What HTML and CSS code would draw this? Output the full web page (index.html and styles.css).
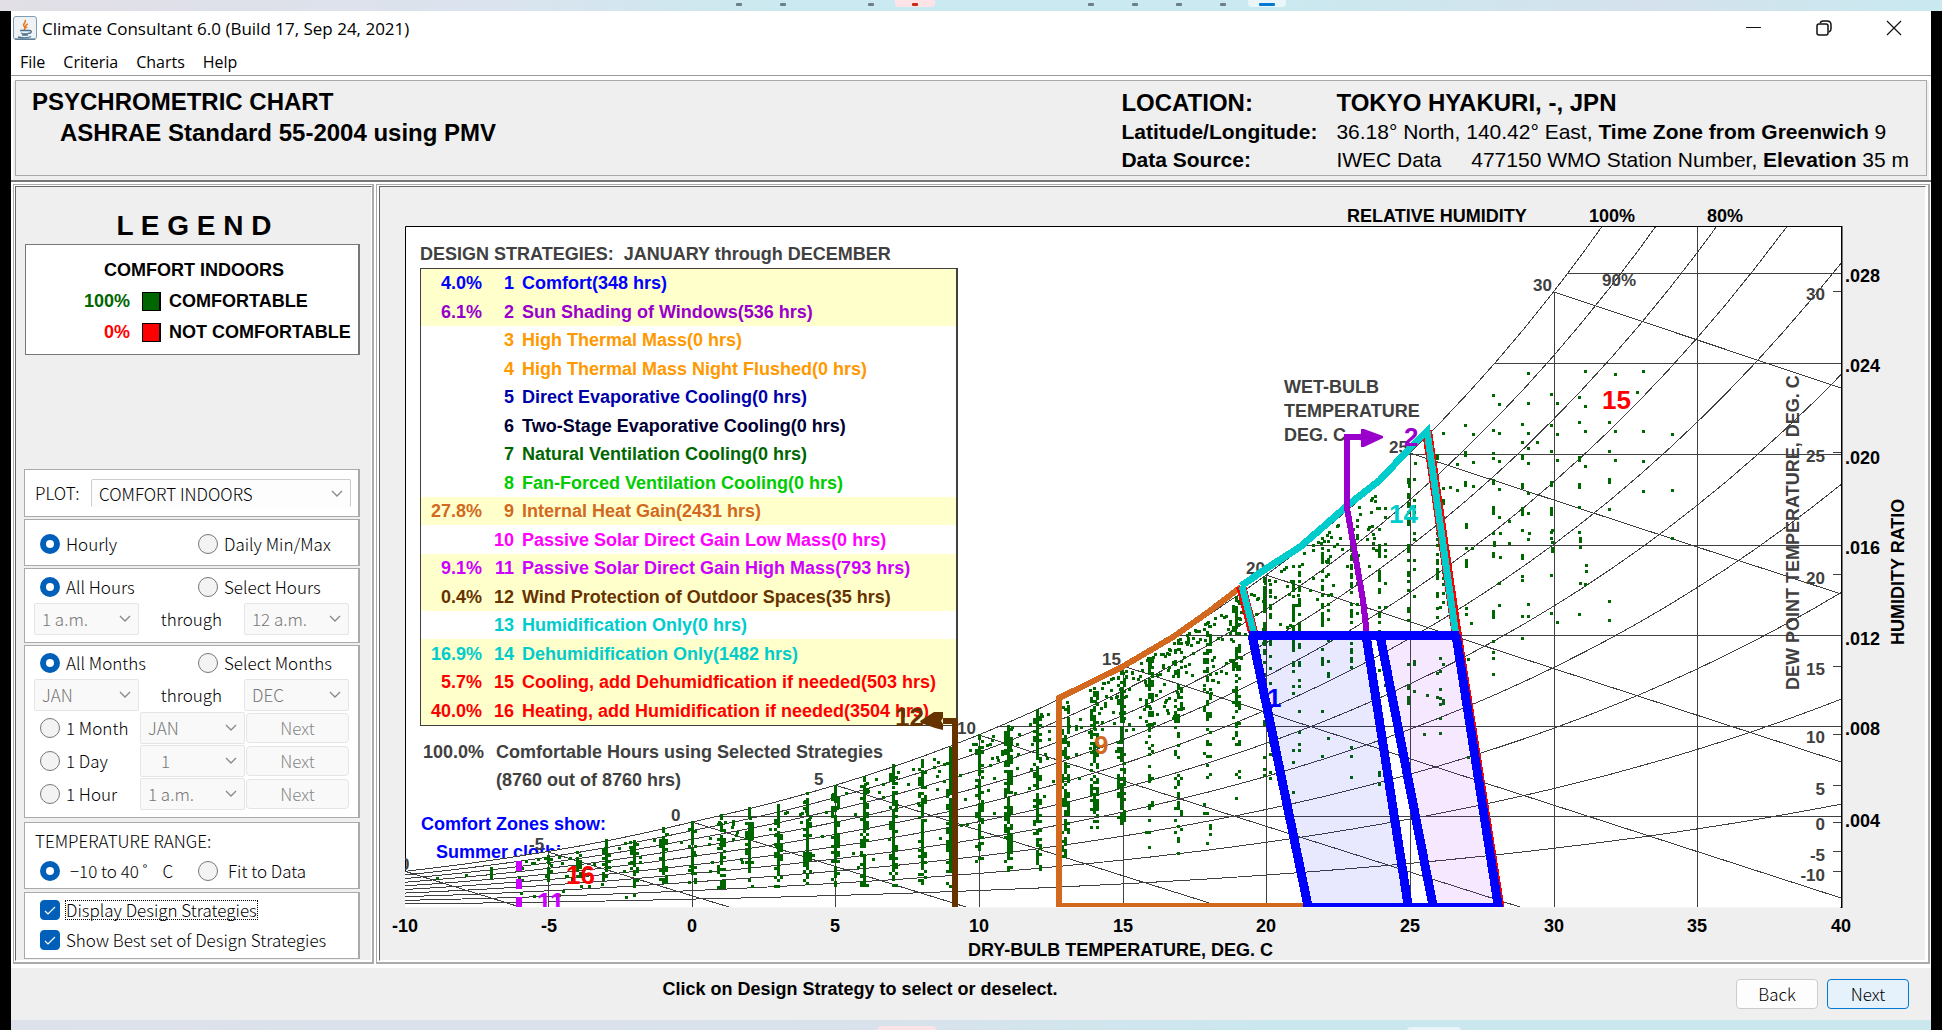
FILE: index.html
```html
<!DOCTYPE html>
<html lang="en">
<head>
<meta charset="utf-8">
<title>Climate Consultant 6.0</title>
<link rel="stylesheet" href="styles.css">
</head>
<body>
<div class="taskbar taskbar-top">
  <svg width="100%" height="11">
    <g fill="#6b7f89"><rect x="736" y="3" width="6" height="3" rx="1"/><rect x="780" y="3" width="6" height="3" rx="1"/><rect x="868" y="3" width="6" height="3" rx="1"/><rect x="1088" y="3" width="6" height="3" rx="1"/><rect x="1132" y="3" width="6" height="3" rx="1"/><rect x="1176" y="3" width="6" height="3" rx="1"/><rect x="1220" y="3" width="6" height="3" rx="1"/></g>
    <rect x="895" y="-6" width="40" height="13" rx="4" fill="#fde3e5"/><rect x="912" y="3" width="6" height="3" rx="1" fill="#c42b1c"/>
    <rect x="1248" y="-6" width="38" height="13" rx="4" fill="#e8f5f9"/><rect x="1259" y="3" width="16" height="3" rx="1" fill="#0078d4"/>
  </svg>
</div>
<div class="window">
  <header class="titlebar">
    <svg class="app-icon" viewBox="0 0 24 24" width="24" height="24">
      <rect x=".5" y=".5" width="23" height="23" rx="2.500" fill="#eef2f5" stroke="#7f9db5"/>
      <path d="M2 23h20" stroke="#3f6179"/>
      <path d="M12 4c2 2-3 4-1 6 1 1 2 2 0 4M15 8c-3 1-3 2-1 4" fill="none" stroke="#e87b1e" stroke-width="1.500"/>
      <path d="M7 14.500h9.500c3 0 2 3-1 3M8 17c2 1 6 1 8 0M9 19h6M5 21c4 1 10 1 13-.500" fill="none" stroke="#4a7391" stroke-width="1.300"/>
    </svg>
    <span class="title">Climate Consultant 6.0 (Build 17, Sep 24, 2021)</span>
    <div class="win-buttons">
      <button aria-label="Minimize"><svg width="16" height="16"><path d="M0 7.500h15" stroke="#111"/></svg></button>
      <button aria-label="Restore"><svg width="16" height="16" fill="none" stroke="#111" stroke-width="1.500"><rect x="1" y="4" width="11" height="11" rx="2"/><path d="M4 3q1-2 3-2h4q4 0 4 4v4q0 2-2 3"/></svg></button>
      <button aria-label="Close"><svg width="16" height="16"><path d="M1 1l14 14M15 1L1 15" stroke="#111" stroke-width="1.200"/></svg></button>
    </div>
  </header>
  <nav class="menubar"><a href="#">File</a><a href="#">Criteria</a><a href="#">Charts</a><a href="#">Help</a></nav>
  <section class="info">
    <h1>PSYCHROMETRIC CHART<span>ASHRAE Standard 55-2004 using PMV</span></h1>
    <dl>
      <dt class="big">LOCATION:</dt><dd class="big">TOKYO HYAKURI, -, JPN</dd>
      <dt>Latitude/Longitude:</dt><dd>36.18° North, 140.42° East, <b>Time Zone from Greenwich</b> 9</dd>
      <dt>Data Source:</dt><dd>IWEC Data <span class="wmo">477150 WMO Station Number,</span> <b>Elevation</b> 35 m</dd>
    </dl>
  </section>
  <main class="body">
    <aside class="frame side"><div class="frame-in side-in">
      <h2>L E G E N D</h2>
      <div class="legend">
        <h3>COMFORT INDOORS</h3>
        <div class="key"><span class="pct green">100%</span><i class="swatch sw-green"></i><span>COMFORTABLE</span></div>
        <div class="key"><span class="pct red">0%</span><i class="swatch sw-red"></i><span>NOT COMFORTABLE</span></div>
      </div>
      <form class="controls">
        <div class="group plot-group"><label for="plot">PLOT:</label><select id="plot"><option>COMFORT INDOORS</option></select></div>
        <div class="group one">
          <div class="pair"><label><input type="radio" name="mode" checked>Hourly</label><label><input type="radio" name="mode">Daily Min/Max</label></div>
        </div>
        <div class="group hours">
          <div class="pair"><label><input type="radio" name="hours" checked>All Hours</label><label><input type="radio" name="hours">Select Hours</label></div>
          <div class="range"><select disabled aria-label="First hour"><option>1 a.m.</option></select><span>through</span><select disabled aria-label="Last hour"><option>12 a.m.</option></select></div>
        </div>
        <div class="group months">
          <div class="pair"><label><input type="radio" name="months" checked>All Months</label><label><input type="radio" name="months">Select Months</label></div>
          <div class="range"><select disabled aria-label="First month"><option>JAN</option></select><span>through</span><select disabled aria-label="Last month"><option>DEC</option></select></div>
          <div class="step"><label><input type="radio" name="months">1 Month</label><select disabled aria-label="Month"><option>JAN</option></select><button type="button" disabled>Next</button></div>
          <div class="step"><label><input type="radio" name="months">1 Day</label><select class="day" disabled aria-label="Day"><option>1</option></select><button type="button" disabled>Next</button></div>
          <div class="step"><label><input type="radio" name="months">1 Hour</label><select disabled aria-label="Hour"><option>1 a.m.</option></select><button type="button" disabled>Next</button></div>
        </div>
        <div class="group temp">
          <p>TEMPERATURE RANGE:</p>
          <div class="pair wide"><label><input type="radio" name="temp" checked>−10 to 40 ˚&nbsp;&nbsp;&nbsp; C</label><label><input type="radio" name="temp">Fit to Data</label></div>
        </div>
        <div class="group checks">
          <label><input type="checkbox" checked><span class="focused">Display Design Strategies</span></label>
          <label><input type="checkbox" checked>Show Best set of Design Strategies</label>
        </div>
      </form>
    </div></aside>
    <section class="frame chart"><div class="frame-in stack">
      <svg class="layer" viewBox="380 187 1545 773">
        <rect x="405" y="226.500" width="1436" height="681" fill="#fff"/>
        <path d="M405.500 907V226.500H1841V907" fill="none" stroke="#000" stroke-width="1"/>
        <path d="M1841.500 226V908" stroke="#000" stroke-width="2"/>
        <g class="t dim">
          <text x="420" y="260" xml:space="preserve">DESIGN STRATEGIES:  JANUARY through DECEMBER</text>
          <text x="484" y="758" text-anchor="end">100.0%</text>
          <text x="496" y="758">Comfortable Hours using Selected Strategies</text>
          <text x="496" y="786">(8760 out of 8760 hrs)</text>
        </g>
        <g class="t blue"><text x="421" y="830">Comfort Zones show:</text><text x="436" y="858">Summer clothi</text></g>
      </svg>
      <table class="strategies">
        <tr class="on c1"><td>4.0%</td><td>1</td><td>Comfort(348 hrs)</td></tr>
        <tr class="on c2"><td>6.1%</td><td>2</td><td>Sun Shading of Windows(536 hrs)</td></tr>
        <tr class="c3"><td></td><td>3</td><td>High Thermal Mass(0 hrs)</td></tr>
        <tr class="c3"><td></td><td>4</td><td>High Thermal Mass Night Flushed(0 hrs)</td></tr>
        <tr class="c5"><td></td><td>5</td><td>Direct Evaporative Cooling(0 hrs)</td></tr>
        <tr class="c6"><td></td><td>6</td><td>Two-Stage Evaporative Cooling(0 hrs)</td></tr>
        <tr class="c7"><td></td><td>7</td><td>Natural Ventilation Cooling(0 hrs)</td></tr>
        <tr class="c8"><td></td><td>8</td><td>Fan-Forced Ventilation Cooling(0 hrs)</td></tr>
        <tr class="on c9"><td>27.8%</td><td>9</td><td>Internal Heat Gain(2431 hrs)</td></tr>
        <tr class="c10"><td></td><td>10</td><td>Passive Solar Direct Gain Low Mass(0 hrs)</td></tr>
        <tr class="on c11"><td>9.1%</td><td>11</td><td>Passive Solar Direct Gain High Mass(793 hrs)</td></tr>
        <tr class="on c12"><td>0.4%</td><td>12</td><td>Wind Protection of Outdoor Spaces(35 hrs)</td></tr>
        <tr class="c13"><td></td><td>13</td><td>Humidification Only(0 hrs)</td></tr>
        <tr class="on c13"><td>16.9%</td><td>14</td><td>Dehumidification Only(1482 hrs)</td></tr>
        <tr class="on c15"><td>5.7%</td><td>15</td><td>Cooling, add Dehumidfication if needed(503 hrs)</td></tr>
        <tr class="on c15"><td>40.0%</td><td>16</td><td>Heating, add Humidification if needed(3504 hrs)</td></tr>
      </table>
      <svg class="layer" viewBox="380 187 1545 773">
        <defs><clipPath id="box"><rect x="405" y="227" width="1436" height="680"/></clipPath></defs>
        <g clip-path="url(#box)">
          <path id="mask" fill="#fff"/>
          <g id="grid" fill="none" stroke="#404040" shape-rendering="crispEdges"></g>
          <g class="t dim small">
            <text x="385" y="870">-10</text><text x="529" y="850">-5</text><text x="671" y="821">0</text><text x="814" y="785">5</text>
            <text x="957" y="734">10</text><text x="1102" y="665">15</text><text x="1246" y="574">20</text><text x="1389" y="453">25</text><text x="1533" y="291">30</text>
            <text x="1602" y="286">90%</text>
          </g>
          <path id="dots" fill="#006600" shape-rendering="crispEdges"/>
          <g class="t dim"><text x="1284" y="393">WET-BULB</text><text x="1284" y="417">TEMPERATURE</text><text x="1284" y="441">DEG. C</text></g>
          <path d="M1249 635H1367L1408 911H1309Z" fill="#0000ff" fill-opacity=".09"/>
          <path d="M1380 635H1456L1499 911H1434Z" fill="#9900ff" fill-opacity=".09"/>
          <g fill="none" shape-rendering="crispEdges">
            <path d="M1059 912V698L1122 667 1173 637 1207 613 1241 587M1056 906H1305" stroke="#d2691e" stroke-width="6"/>
            <path d="M1241 586L1253 632 M1427 431L1457 636 1500 911" stroke="#f00" stroke-width="10"/>
            <path d="M1241 586L1267 568 1300 547 1323 527 1348 505 1380 480 1410 448 1427 431L1456 636M1242 586L1254 634" stroke="#00cccc" stroke-width="7"/>
            <path d="M1362 437H1347V508L1363 600 1367 636" stroke="#9900cc" stroke-width="6"/>
            <path d="M1249 635.500H1459" stroke="#00f" stroke-width="9"/>
            <path d="M1252 635L1309 911M1366 635L1409 911M1380 635L1434 911M1456 635L1499 911" stroke="#00f" stroke-width="9"/>
            <path d="M1306 905H1502" stroke="#00f" stroke-width="4"/>
            <path d="M943 721H955V907" stroke="#663300" stroke-width="6"/>
            <path d="M519 861v10M519 879v10M519 897v10" stroke="#cc00ff" stroke-width="6"/>
          </g>
          <path d="M1361 429l3 0 19 7v2l-19 9h-3v-6l-2-4 2-4z" fill="#9900cc"/>
          <path d="M943 712l-9 0-14 9 1 2 14 5 8 2v-6l-2-3 2-3z" fill="#663300"/>
          <g class="big-n">
            <text x="1267" y="707" fill="#00f">1</text><text x="1404" y="446" fill="#9900cc">2</text><text x="1094" y="754" fill="#d2691e">9</text>
            <text x="537" y="911" fill="#cc00ff">11</text><text x="895" y="726" fill="#663300">12</text><text x="1389" y="523" fill="#0cc">14</text>
            <text x="1602" y="409" fill="#f00">15</text><text x="566" y="884" fill="#f00">16</text>
          </g>
          <g class="t dim small" text-anchor="end">
            <text x="1825" y="300">30</text><text x="1825" y="462">25</text><text x="1825" y="584">20</text><text x="1825" y="675">15</text><text x="1825" y="743">10</text><text x="1825" y="795">5</text><text x="1825" y="830">0</text><text x="1825" y="861">-5</text><text x="1825" y="881">-10</text>
          </g>
          <text class="t dim" transform="translate(1799 690) rotate(-90)">DEW POINT TEMPERATURE, DEG. C</text>
        </g>
        <g class="t">
          <text x="1347" y="222">RELATIVE HUMIDITY</text><text x="1589" y="222">100%</text><text x="1707" y="222">80%</text>
          <text x="1845" y="282">.028</text><text x="1845" y="372">.024</text><text x="1845" y="464">.020</text><text x="1845" y="554">.016</text><text x="1845" y="645">.012</text><text x="1845" y="735">.008</text><text x="1845" y="827">.004</text>
          <text x="968" y="956">DRY-BULB TEMPERATURE, DEG. C</text>
          <text transform="translate(1904 645) rotate(-90)">HUMIDITY RATIO</text>
          <g id="axis" text-anchor="middle"></g>
        </g>
      </svg>
    </div></section>
  </main>
  <footer class="footer">
    <p>Click on Design Strategy to select or deselect.</p>
    <div class="nav-buttons"><button>Back</button><button class="primary">Next</button></div>
  </footer>
</div>
<div class="taskbar taskbar-bottom">
  <svg width="100%" height="11"><rect x="867" y="6" width="58" height="12" rx="4" fill="#fde3e5"/><rect x="1396" y="7" width="54" height="12" rx="4" fill="#e8f5f9"/></svg>
</div>
<script src="chart.js"></script>
</body>
</html>
```
FILE: chart.js
```js
// Psychrometric grid: dry-bulb temperature across, humidity ratio up.
const X = t => 691.8 + 28.73 * t;
const Y = w => 907.6 - 22655 * w;
const ps = t => t < 0
  ? 611.15 * Math.exp(22.452 * t / (272.55 + t))
  : 611.21 * Math.exp(17.502 * t / (240.97 + t));
const ratio = (t, rh) => { const p = ps(t) * rh; return 0.622 * p / (101325 - p); };
const satY = t => Y(ratio(t, 1));
const line = rh => {
  let d = '';
  for (let t = -10; t <= 40; t++) d += (d ? 'L' : 'M') + X(t).toFixed(1) + ' ' + Y(ratio(t, rh)).toFixed(1);
  return d;
};
const satT = y => { let t = -10; while (satY(t) > y) t += 0.05; return t; };

document.getElementById('mask').setAttribute('d', line(1) + 'V907H405Z');

let grid = '';
for (let i = 1; i <= 10; i++) grid += line(i / 10);
for (let t = -10; t < 40; t += 5) grid += `M${Math.round(X(t)) + .5} 907V${Math.max(227, satY(t)).toFixed(0)}`;
for (let w = 0.004; w < 0.03; w += 0.004) {
  const y = Math.floor(Y(w)) + .5;
  grid += `M${X(satT(y)).toFixed(0)} ${y}H1841`;
}
// Wet-bulb lines, each starting on the saturation curve
const wet = [[-10, 520, 907], [-5, 729, 907], [0, 966, 907], [5, 1222, 907], [10, 1520, 907], [15, 1841, 898], [20, 1841, 762], [25, 1841, 594], [30, 1841, 388]];
for (const [t, x, y] of wet) {
  grid += `M${X(t).toFixed(0)} ${satY(t).toFixed(0)}L${x} ${y}M1833 ${Math.floor(satY(t)) + .5}H1841`;
}
document.getElementById('grid').innerHTML = `<path d="${grid}"/>`;

let axis = '';
for (let t = -10; t <= 40; t += 5) axis += `<text x="${Math.round(X(t)) + (t < 0 ? 1 : 0)}" y="932">${t}</text>`;
document.getElementById('axis').innerHTML = axis;

// Hourly readings: [temperature, top, bottom, centre density, side density]
let seed = 7;
const rnd = () => (seed = (seed * 16807) % 2147483647) / 2147483647;
const cols = [
  [-7, 868, 883, .8, .3], [-6, 862, 885, .7, .3], [-5, 856, 886, .9, .3], [-4, 852, 885, .9, .5], [-3, 840, 883, .95, .4],
  [-2, 838, 888, .9, .5], [-1, 828, 885, .95, .4], [0, 822, 883, .95, .45], [1, 815, 890, .9, .4], [2, 808, 887, .95, .4],
  [3, 805, 887, .9, .4], [4, 793, 885, .95, .4], [5, 786, 888, .95, .45], [6, 777, 888, .9, .35], [7, 765, 892, .92, .35],
  [8, 760, 893, .85, .35], [9, 748, 887, .97, .5], [10, 735, 864, .9, .35], [11, 723, 873, .9, .45], [12, 710, 870, .9, .45],
  [13, 703, 867, .7, .5], [14, 686, 828, .7, .45], [15, 670, 825, .8, .4], [16, 655, 730, .6, .5], [16, 730, 850, .35, .18],
  [17, 640, 730, .6, .5], [17, 730, 855, .28, .14], [18, 620, 720, .55, .4], [18, 720, 850, .2, .12], [19, 597, 720, .6, .4],
  [19, 720, 822, .24, .14], [20, 575, 700, .5, .4], [20, 700, 785, .3, .1], [21, 560, 690, .5, .35], [21, 690, 800, .15, .1],
  [22, 538, 680, .5, .3], [22, 690, 780, .08, .03], [23, 520, 680, .45, .25], [23, 690, 780, .1, .03], [24, 505, 640, .42, .2],
  [24, 640, 790, .08, .04], [25, 479, 640, .45, .22], [25, 640, 735, .14, .1], [26, 500, 620, .42, .1], [26, 640, 735, .07, .06],
  [27, 500, 622, .34, .05], [28, 530, 575, .35, .05], [29, 530, 575, .3, .05], [30, 530, 565, .3, .02], [31, 535, 600, .3, .05]
];
let d = '';
const dot = (x, y) => { d += `M${Math.round(x) - 1} ${Math.round(y) - 1}h3v3h-3z`; };
for (const [t, top, bot, mid, side] of cols) {
  const x = X(t) + (t > 14 ? -2 : 0);
  for (let y = top; y < bot; y += 3) {
    const fade = y > bot - 15 ? .7 : 1;
    if (rnd() < mid * fade) dot(x, y);
    if (rnd() < side * fade && y > satY(t) + 5) dot(x + (t > 19 ? 6 : 3), y);
    if (t < 20 && rnd() < side * .8 * fade && y > top + 6) dot(x - 3, y);
  }
}
// Readings between whole degrees crowd under the saturation curve
const between = (a, b, n, depth) => {
  for (let i = 0; i < n; i++) {
    const t = a + rnd() * (b - a), k = rnd();
    dot(X(t), satY(t) + 6 + k * k * depth);
  }
};
between(-6, 4, 75, 55);
between(4, 10, 45, 85);
between(10, 14, 60, 90);
between(14, 20, 180, 75);
between(20, 24, 70, 70);
dot(437, 878); dot(466, 875);
const single = {
  1409: [483, 486], 1415: [463], 1437: [455, 458], 1443: [433, 488], 1450: [487], 1457: [464, 490],
  1465: [425, 452, 455, 482, 485], 1473: [434, 462, 486], 1471: [623], 1468: [659, 757],
  1493: [395, 430, 453, 458, 480, 483, 507, 510, 513, 533, 553, 556, 611, 614, 617, 641, 652, 658, 674],
  1499: [404, 433, 461, 489, 517, 583, 605], 1509: [521, 543],
  1522: [424, 442, 455, 458, 484, 487, 508, 511, 514, 530, 555, 558, 576, 580, 616, 638],
  1528: [373, 403, 433, 448, 463, 493, 513, 539, 604, 616], 1537: [442],
  1551: [394, 425, 451, 482, 485, 508, 511, 514, 532, 538, 575, 613], 1557: [403, 434, 460, 622],
  1579: [397, 422, 457, 460, 484, 487, 507, 532, 614], 1585: [371, 406, 431, 466, 584],
  1609: [422, 451, 479, 482, 509, 601, 620], 1615: [374, 431, 460], 1637: [392],
  1643: [371, 431, 461, 491], 1672: [434, 490, 538],
  1440: [607, 658, 671, 689, 698, 704, 718, 733], 1427: [695], 1424: [734]
};
for (const x in single) single[x].forEach(y => dot(+x, y));
document.getElementById('dots').setAttribute('d', d);
```
FILE: styles.css
```css
* { box-sizing: border-box; }
body { margin: 0; background: #000; color: #000; font-family: "Liberation Sans", Arial, sans-serif; font-size: 18px; }
h1, h2, h3, p, dl, dd { margin: 0; }
.taskbar { height: 11px; background: linear-gradient(90deg, #e2dfe6, #dbe3ee 25%, #cbe9f0 40%, #cbe9f0 65%, #d5e2ed 85%, #c9e9f0); }
.taskbar svg { display: block; }
.taskbar-bottom { margin: 0 11px; background: linear-gradient(90deg, #dde1ea, #d9e2ec 45%, #cbe7ee 65%, #cbe7ee); }
.window { margin: 0 11px; background: #efefef; }

.titlebar { display: flex; align-items: center; height: 34px; padding: 0 2px; background: #fff; font-family: "Open Sans", "Noto Sans", sans-serif; font-size: 17px; }
.title { margin-left: 5px; flex: 1; }
.win-buttons { display: flex; }
.win-buttons button { display: flex; justify-content: center; align-items: center; width: 70px; height: 32px; padding: 0; border: 0; background: none; }
.menubar { display: flex; gap: 18px; height: 31px; padding: 1px 0 0 9px; background: #fff; border-bottom: 1px solid #999; font: 16px/32px "Open Sans", "Noto Sans", sans-serif; }
.menubar a { color: #000; text-decoration: none; }

.info { display: flex; justify-content: space-between; height: 104px; padding: 5px 10px 0 19px; border: 2px solid #fff; border-top-width: 5px; border-bottom: 0; outline: 1px solid #aaa; outline-offset: -5px; }
.info h1 { font-size: 24px; line-height: 31px; }
.info h1 span { display: block; padding-left: 28px; }
.info dl { display: grid; grid-template-columns: 215px auto; align-content: start; padding: 1px 10px 0 0; font-size: 21px; line-height: 28px; }
.info dt { font-weight: bold; }
.info .big { font-size: 24px; line-height: 31px; font-weight: bold; }
.wmo { margin-left: 24px; }

.body { display: flex; gap: 2px; padding: 2px 1px 4px 2px; border-top: 2px solid #777; background: #fff; }
.frame { border: 1px solid #aaa; border-right-width: 2px; border-bottom-width: 2px; padding: 1px; background: #fff; }
.frame-in { border: 1px solid #fff; border-top-color: #666; border-left-color: #666; background: #efefef; }
.side { width: 361px; flex: none; display: flex; }
.side-in { flex: 1; display: flex; flex-direction: column; padding: 0 11px 1px 8px; }
.chart { flex: 1; min-width: 0; padding: 1px 2px; }
.stack { display: grid; }
.layer { grid-area: 1 / 1; width: 100%; height: auto; display: block; pointer-events: none; }

h2 { font-size: 28px; line-height: 32px; text-align: center; padding: 23px 0 0 4px; }
.legend { margin: 2px 0 0 1px; height: 111px; background: #fff; border: 1px solid #777; border-right-width: 2px; padding: 10px 4px 0 8px; font-weight: bold; white-space: nowrap; }
.legend h3 { font-size: 18px; line-height: 31px; text-align: center; }
.key { display: grid; grid-template-columns: 100px 19px auto; align-items: center; column-gap: 8px; height: 31px; }
.key .pct { text-align: right; padding-right: 4px; }
.green { color: #060; }
.red { color: #f00; }
.swatch { width: 19px; height: 19px; border: 1px solid #000; border-right-width: 2px; }
.sw-green { background: #060; }
.sw-red { background: #f00; }

.controls { display: flex; flex-direction: column; gap: 2px; margin-top: auto; font: 300 17px/24px "Noto Sans CJK JP", "Noto Sans", sans-serif; }
.controls button, .controls select, .nav-buttons button { font: inherit; }
.group { background: #fff; border: 1px solid #aaa; border-right-width: 2px; }
.plot-group { display: flex; align-items: center; height: 48px; padding: 0 7px 0 10px; }
.plot-group label { width: 56px; }
.plot-group select { flex: 1; height: 28px; border-bottom: 0; background-color: #fdfdfd; border-color: #ccc; color: #000; }
.one { height: 47px; padding-top: 12px; }
.hours { height: 75px; padding-top: 6px; }
.months { height: 173px; padding-top: 5px; }
.temp { height: 67px; margin-top: 2px; padding-top: 6px; }
.checks { display: flex; flex-direction: column; gap: 8px; height: 67px; margin-top: 1px; padding: 7px 0 0 15px; }
.temp p { padding: 0 0 6px 10px; }
.pair { display: grid; grid-template-columns: 158px auto; padding-left: 15px; }
.group label { display: flex; align-items: center; gap: 6px; white-space: nowrap; }
.wide label { gap: 10px; }
.range { display: flex; align-items: center; justify-content: space-between; padding: 4px 9px 0 9px; }
.step { display: grid; grid-template-columns: 99px 105px 103px; column-gap: 1px; align-items: center; padding: 1px 9px 0 15px; }
select { appearance: none; width: 105px; height: 32px; padding: 0 7px; border: 1px solid #e5e5e5; border-radius: 2px; background: #f9f9f9 url("data:image/svg+xml,%3Csvg xmlns='http://www.w3.org/2000/svg' width='12' height='8'%3E%3Cpath d='M1 1l5 5 5-5' fill='none' stroke='%23888' stroke-width='1.3'/%3E%3C/svg%3E") no-repeat right 7px center; }
select:disabled { color: #777; opacity: 1; }
.day { padding-left: 20px; }
.step button { height: 30px; border: 1px solid #e5e5e5; border-radius: 4px; background: #f9f9f9; color: #888; padding: 0; }
input[type=radio], input[type=checkbox] { appearance: none; flex: none; width: 20px; height: 20px; margin: 0; border: 1px solid #777; border-radius: 50%; background: #f3f3f3; }
input[type=radio]:checked { border: 6px solid #005fb8; background: #fff; }
input[type=checkbox] { border-radius: 4px; border-color: #005fb8; background: #005fb8 url("data:image/svg+xml,%3Csvg xmlns='http://www.w3.org/2000/svg' width='12' height='9'%3E%3Cpath d='M1 5l3 3 7-7' fill='none' stroke='white' stroke-width='1.2'/%3E%3C/svg%3E") no-repeat center; }
.focused { line-height: 18px; outline: 1px dotted #000; }

.strategies { grid-area: 1 / 1; place-self: start; width: 538px; margin: 81px 0 0 40px; border: 1px solid #404040; border-right-width: 2px; border-collapse: separate; border-spacing: 0; background: #fff; font-weight: bold; font-size: 18px; line-height: 28px; table-layout: fixed; white-space: nowrap; }
.strategies tr { height: 28px; }
.strategies tr:nth-child(even) { height: 29px; }
.strategies td { padding: 0; text-align: right; }
.strategies td:nth-child(1) { width: 61px; }
.strategies td:nth-child(2) { width: 32px; }
.strategies td:nth-child(3) { text-align: left; padding-left: 8px; }
.on { background: #ffffcc; }
.c1 { color: #00f; } .c2 { color: #90c; } .c3 { color: #f90; } .c5 { color: #00a; } .c6 { color: #003; } .c7 { color: #060; } .c8 { color: #0c0; }
.c9 { color: #d2691e; } .c10 { color: #f0f; } .c11 { color: #c0f; } .c12 { color: #630; } .c13 { color: #0cc; } .c15 { color: #f00; }

.t { font-weight: bold; font-size: 18px; }
.small { font-size: 17px; }
.dim { fill: #404040; }
.blue { fill: #00f; }
.big-n { font-weight: bold; font-size: 26px; }

.footer { display: grid; grid-template-columns: 1fr auto 1fr; height: 52px; padding: 0 22px 0 0; }
.footer p { grid-column: 2; padding-top: 11px; margin-right: 200px; font-weight: bold; font-size: 18px; line-height: 20px; }
.nav-buttons { justify-self: end; display: flex; gap: 9px; padding-top: 11px; font: 300 17px/24px "Noto Sans CJK JP", "Noto Sans", sans-serif; }
.nav-buttons button { width: 82px; height: 30px; padding: 0; border: 1px solid #ccc; border-radius: 4px; background: #fdfdfd; color: #000; }
.nav-buttons .primary { border-color: #0078d4; background: #e5f1fb; }
```
